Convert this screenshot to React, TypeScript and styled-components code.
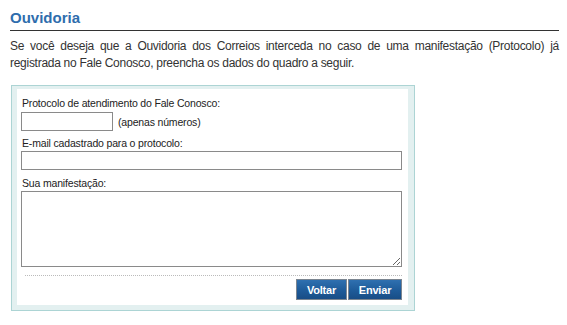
import React from "react";
import styled, { createGlobalStyle } from "styled-components";

const Global = createGlobalStyle`
  html, body { margin: 0; padding: 0; background: #fff; }
  body { font-family: "Liberation Sans", Arial, sans-serif; color: #333; }
`;

const Page = styled.div`
  padding: 8px 8px 0 10px;
`;

const Title = styled.h1`
  margin: 0;
  font-size: 15px;
  font-weight: bold;
  color: #2e6dad;
  line-height: 20px;
  padding-bottom: 2px;
  border-bottom: 1px solid #333;
`;

const Intro = styled.p`
  margin: 7px 0 0 0;
  font-size: 12px;
  letter-spacing: -0.28px;
  line-height: 17px;
  text-align: justify;
  color: #333;
`;

const Frame = styled.div`
  margin: 13px 0 0 1px;
  width: 391px;
  border: 1px solid #acd4d4;
  background: #e3f0f0;
  padding: 3px 6px 5px 5px;
`;

const Inner = styled.form`
  background: #fff;
  padding: 8px 6px 5px 4px;
  display: flex;
  flex-direction: column;
`;

const Label = styled.label<{ $top?: number }>`
  font-size: 10.5px;
  letter-spacing: -0.17px;
  line-height: 13px;
  color: #222;
  padding-left: 1px;
  margin-top: ${(p) => p.$top ?? 0}px;
`;

const Row = styled.div`
  display: flex;
  align-items: center;
  gap: 5px;
  margin-top: 2px;
`;

const Hint = styled.span`
  font-size: 10.5px;
  letter-spacing: -0.17px;
  color: #222;
`;

const TextInput = styled.input<{ $w?: string; $top?: number }>`
  box-sizing: border-box;
  width: ${(p) => p.$w ?? "100%"};
  height: 19px;
  border: 1px solid #8a8a8a;
  padding: 1px 3px;
  font-family: inherit;
  font-size: 11px;
  margin: ${(p) => p.$top ?? 0}px 0 0 0;
`;

const Area = styled.textarea`
  box-sizing: border-box;
  width: 100%;
  height: 76px;
  border: 1px solid #8a8a8a;
  margin: 1px 0 0 0;
  font-family: inherit;
  font-size: 11px;
  resize: vertical;
  display: block;
`;

const Divider = styled.div`
  margin: 8px 0 0 4px;
  border-top: 1px dotted #bbb;
`;

const Actions = styled.div`
  display: flex;
  justify-content: flex-end;
  gap: 1px;
  margin-top: 3px;
`;

const Button = styled.button<{ $w: number }>`
  box-sizing: border-box;
  width: ${(p) => p.$w}px;
  height: 21px;
  border: 1px solid #7b8590;
  background: linear-gradient(#2f70b0, #1e5b99 55%, #184d86);
  color: #fff;
  font-family: inherit;
  font-weight: bold;
  font-size: 11px;
  letter-spacing: -0.2px;
  padding: 0;
  cursor: pointer;
`;

export default function App() {
  return (
    <Page>
      <Global />
      <Title>Ouvidoria</Title>
      <Intro>
        Se você deseja que a Ouvidoria dos Correios interceda no caso de uma
        manifestação (Protocolo) já registrada no Fale Conosco, preencha os
        dados do quadro a seguir.
      </Intro>
      <Frame>
        <Inner onSubmit={(e) => e.preventDefault()}>
          <Label>Protocolo de atendimento do Fale Conosco:</Label>
          <Row>
            <TextInput $w="92px" />
            <Hint>(apenas números)</Hint>
          </Row>
          <Label $top={6}>E-mail cadastrado para o protocolo:</Label>
          <TextInput $top={1} />
          <Label $top={7}>Sua manifestação:</Label>
          <Area />
          <Divider />
          <Actions>
            <Button type="button" $w={51}>Voltar</Button>
            <Button type="submit" $w={54}>Enviar</Button>
          </Actions>
        </Inner>
      </Frame>
    </Page>
  );
}
